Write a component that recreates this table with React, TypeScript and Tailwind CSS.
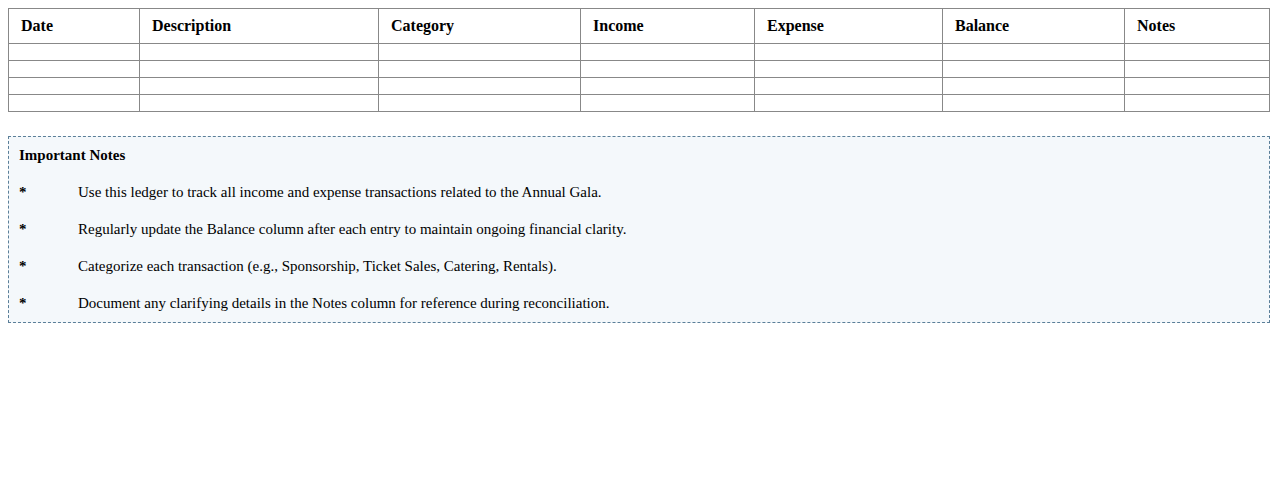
import React from "react";

const cols = [
  { name: "Date", w: "w-[131px]" },
  { name: "Description", w: "w-[239px]" },
  { name: "Category", w: "w-[202px]" },
  { name: "Income", w: "w-[174px]" },
  { name: "Expense", w: "w-[188px]" },
  { name: "Balance", w: "w-[182px]" },
  { name: "Notes", w: "w-[145px]" },
];

const notes = [
  "Use this ledger to track all income and expense transactions related to the Annual Gala.",
  "Regularly update the Balance column after each entry to maintain ongoing financial clarity.",
  "Categorize each transaction (e.g., Sponsorship, Ticket Sales, Catering, Rentals).",
  "Document any clarifying details in the Notes column for reference during reconciliation.",
];

export default function App() {
  return (
    <div className="p-2 font-['Liberation_Serif',serif] text-black bg-white min-h-[501px]">
      <table className="w-full border-collapse table-fixed">
        <thead>
          <tr>
            {cols.map((c) => (
              <th
                key={c.name}
                className={`${c.w} border border-[#888888] px-3 py-2 text-left font-bold text-[16px] leading-[18px]`}
              >
                {c.name}
              </th>
            ))}
          </tr>
        </thead>
        <tbody>
          {[0, 1, 2, 3].map((r) => (
            <tr key={r}>
              {cols.map((c) => (
                <td key={c.name} className="border border-[#888888] px-3 py-2 h-[17px]"></td>
              ))}
            </tr>
          ))}
        </tbody>
      </table>

      <div className="mt-[24px] border border-dashed border-[#5b7f99] bg-[#f4f8fb] px-[10px] pt-[9px] pb-[10px] flex flex-col gap-[19px] text-[15px] leading-[18px]">
        <div className="font-bold">Important Notes</div>
        {notes.map((n) => (
          <div key={n} className="flex">
            <span className="w-[59px] shrink-0 font-bold">*</span>
            <span>{n}</span>
          </div>
        ))}
      </div>
    </div>
  );
}
